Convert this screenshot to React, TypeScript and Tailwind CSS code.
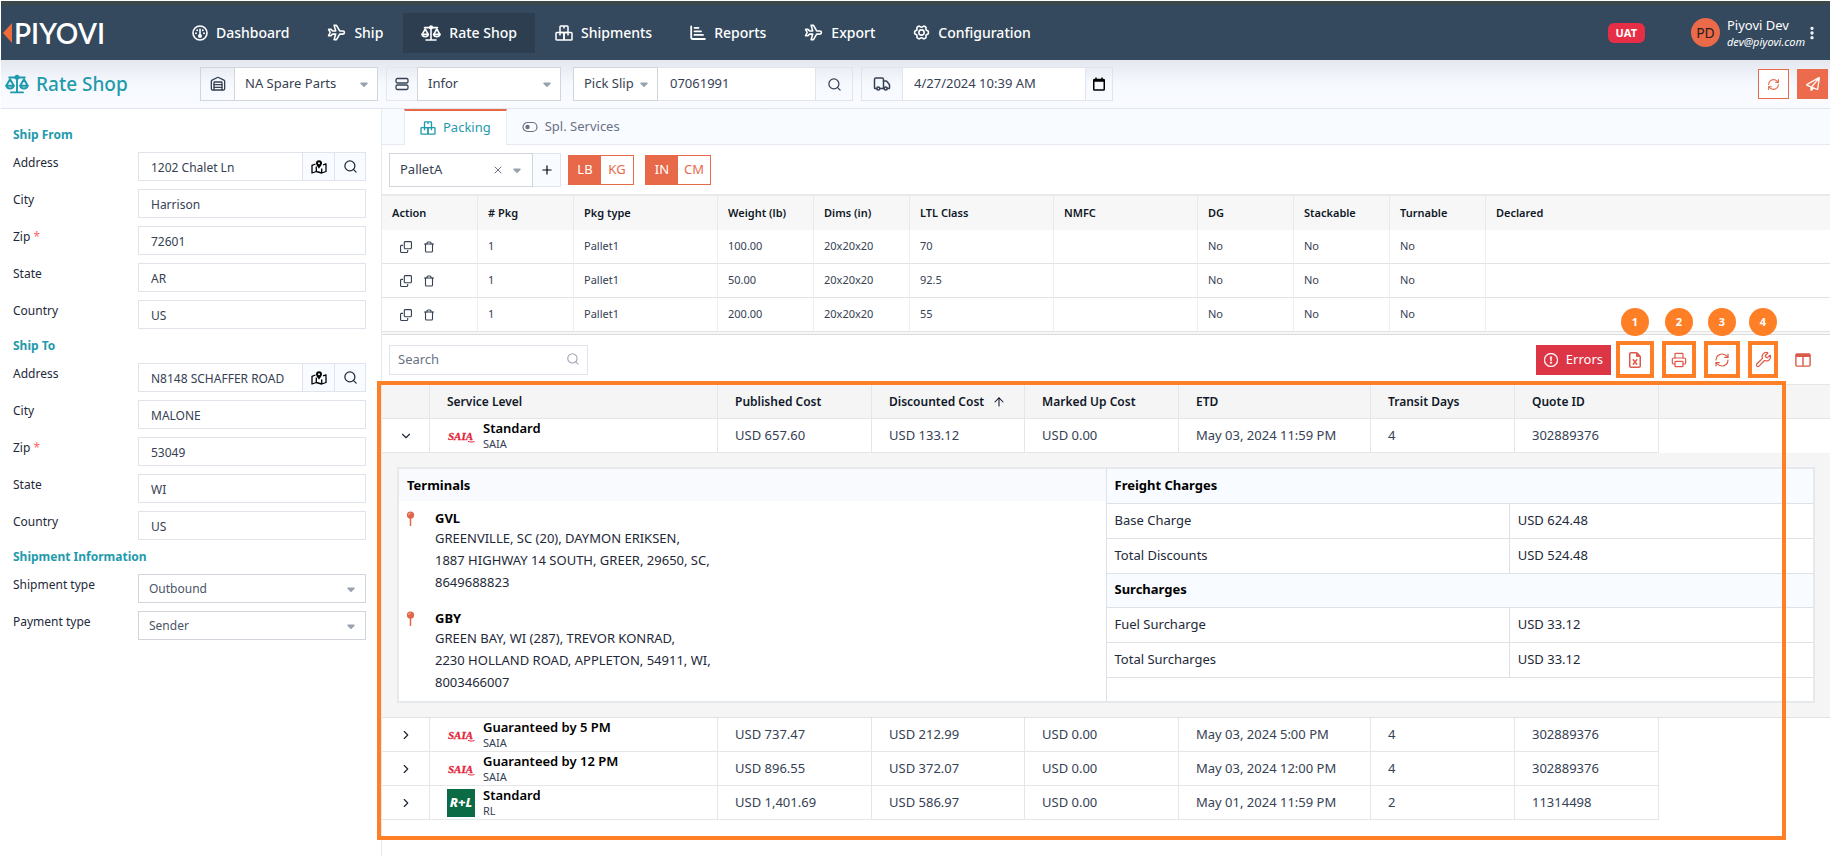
import React, { useState } from 'react';
import { ArrowUp, ChevronDown, ChevronRight, EllipsisVertical, Plus, Printer, RefreshCw, Search, Trash, Truck, Warehouse, Wrench, X } from 'lucide-react';
import { FaCaretDown, FaRegClone, FaRegFileExcel, FaRegPaperPlane } from 'react-icons/fa6';
import { PiGearSixBold } from 'react-icons/pi';
import { TbPlane } from 'react-icons/tb';
import { BsExclamationCircle } from 'react-icons/bs';

type IconProps = { className?: string };

const DashboardIcon = ({ className }: IconProps) => (
    <svg className={className} viewBox="0 0 16 16" fill="none" stroke="currentColor" strokeWidth="1.6" strokeLinecap="round">
        <circle cx="8" cy="8" r="7" />
        <path d="M8 4.2V10" />
        <circle cx="8" cy="11" r="1.2" fill="currentColor" />
        <path d="M4 8.2h.01M12 8.2h.01M5.2 5.2h.01M10.8 5.2h.01" strokeWidth="1.9" />
    </svg>
);

const ScaleIcon = ({ className }: IconProps) => (
    <svg className={className} viewBox="0 0 20 16" fill="none" stroke="currentColor" strokeWidth="1.6" strokeLinecap="round" strokeLinejoin="round">
        <path d="M3.5 2.6h13M10 3.5v11.3M5 15h10" />
        <circle cx="10" cy="2.4" r="1.3" fill="currentColor" />
        <path d="M1.2 9.3 4.2 4l3 5.3M12.8 9.3l3-5.3 3 5.3" />
        <path d="M1 9.4h6.4c-.3 1.5-1.6 2.4-3.2 2.4S1.3 10.9 1 9.4zM12.6 9.4H19c-.3 1.5-1.6 2.4-3.2 2.4s-2.9-.9-3.2-2.4z" />
    </svg>
);

const BoxesIcon = ({ className }: IconProps) => (
    <svg className={className} viewBox="0 0 18 16" fill="none" stroke="currentColor" strokeWidth="1.5" strokeLinejoin="round">
        <rect x="5" y="1" width="8" height="6.5" rx=".8" />
        <rect x="1" y="7.5" width="8" height="7.5" rx=".8" />
        <rect x="9" y="7.5" width="8" height="7.5" rx=".8" />
        <path d="M9 1v2.5M5 7.5v3M13 7.5v3" />
    </svg>
);

const ReportIcon = ({ className }: IconProps) => (
    <svg className={className} viewBox="0 0 16 16" fill="none" stroke="currentColor" strokeWidth="1.8" strokeLinecap="round" strokeLinejoin="round">
        <path d="M1.2 1.5v10.8c0 1 .6 1.7 1.7 1.7h12" />
        <path d="M4.5 2.8h4M4.5 6.3H11M4.5 9.9H13" />
    </svg>
);

const ServerIcon = ({ className }: IconProps) => (
    <svg className={className} viewBox="0 0 14 14" fill="none" stroke="currentColor" strokeWidth="1.3">
        <rect x="1" y="1.5" width="12" height="4.5" rx="1.4" />
        <rect x="1" y="8" width="12" height="4.5" rx="1.4" />
    </svg>
);

const CalendarIcon = ({ className }: IconProps) => (
    <svg className={className} viewBox="0 0 14 14" fill="none" stroke="currentColor" strokeWidth="1.5">
        <rect x="1.75" y="2.5" width="10.5" height="10.5" rx=".8" />
        <path d="M1.5 3.5h11" strokeWidth="2.5" />
        <path d="M4 .5v2.5M10 .5v2.5" />
    </svg>
);

const MapIcon = ({ className }: IconProps) => (
    <svg className={className} viewBox="0 0 16 14" fill="none" stroke="currentColor" strokeWidth="1.3" strokeLinejoin="round">
        <path d="M4.5 4 1 5.3V13l4.3-1.5 5.4 1.5 4.3-1.5V3.8l-3 1" />
        <path d="M5.3 6.5v5M10.7 8.5V13" />
        <path d="M8 .3a3 3 0 0 0-3 3C5 5 8 8.6 8 8.6S11 5 11 3.3a3 3 0 0 0-3-3z" fill="currentColor" stroke="none" />
        <circle cx="8" cy="3.2" r="1" fill="#fff" stroke="none" />
    </svg>
);

const ToggleIcon = ({ className }: IconProps) => (
    <svg className={className} viewBox="0 0 16 12" fill="none" stroke="currentColor" strokeWidth="1.2">
        <rect x="1" y="1.5" width="14" height="9" rx="4.5" />
        <circle cx="5.5" cy="6" r="2.2" fill="currentColor" stroke="none" />
    </svg>
);

const PinIcon = ({ className }: IconProps) => (
    <svg className={className} viewBox="0 0 10 14" fill="none">
        <path d="M5 7v6.5" stroke="#e0674a" strokeWidth="1.4" strokeLinecap="round" />
        <circle cx="5" cy="3.8" r="3.4" fill="#e0674a" />
        <path d="M3.2 3.8A1.8 1.8 0 0 1 5 2" stroke="#f7c4b6" strokeWidth=".8" />
    </svg>
);

const ColumnsIcon = ({ className }: IconProps) => (
    <svg className={className} viewBox="0 0 16 14" fill="none" stroke="currentColor" strokeWidth="1.4">
        <rect x=".9" y=".9" width="14.2" height="12.2" rx="1" />
        <path d="M1 2.5h14" strokeWidth="3" />
        <path d="M8 3v10" />
    </svg>
);

const SaiaLogo = () => (
    <svg className="w-7 h-[18px]" viewBox="0 0 28 18" aria-label="SAIA">
        <text x="1" y="13" fontSize="11" fontWeight="700" fontStyle="italic" fontFamily="Liberation Serif, serif" fill="#e3253a" stroke="#e3253a" strokeWidth=".3">SAIA</text>
        <path d="M21 14.3c2 .9 4 1 6.5.2" fill="none" stroke="#e3253a" />
    </svg>
);

const RlLogo = () => (
    <span className="w-7 h-7 bg-[#0a6b45] text-white text-[13px] font-extrabold italic flex items-center justify-center">R+L</span>
);

const navItems = [
    { label: 'Dashboard', icon: <DashboardIcon className="w-4 h-4" /> },
    { label: 'Ship', icon: <TbPlane className="w-[19px] h-[19px]" /> },
    { label: 'Rate Shop', icon: <ScaleIcon className="w-5 h-4" />, active: true },
    { label: 'Shipments', icon: <BoxesIcon className="w-[18px] h-4" /> },
    { label: 'Reports', icon: <ReportIcon className="w-4 h-4" /> },
    { label: 'Export', icon: <TbPlane className="w-[19px] h-[19px]" /> },
    { label: 'Configuration', icon: <PiGearSixBold className="w-[17px] h-[17px]" /> },
];

const packages = [
    { pkg: 1, type: 'Pallet1', weight: '100.00', dims: '20x20x20', ltl: '70' },
    { pkg: 1, type: 'Pallet1', weight: '50.00', dims: '20x20x20', ltl: '92.5' },
    { pkg: 1, type: 'Pallet1', weight: '200.00', dims: '20x20x20', ltl: '55' },
];

const rates = [
    { service: 'Standard', carrier: 'SAIA', published: 'USD 657.60', discounted: 'USD 133.12', marked: 'USD 0.00', etd: 'May 03, 2024 11:59 PM', days: 4, quote: '302889376' },
    { service: 'Guaranteed by 5 PM', carrier: 'SAIA', published: 'USD 737.47', discounted: 'USD 212.99', marked: 'USD 0.00', etd: 'May 03, 2024 5:00 PM', days: 4, quote: '302889376' },
    { service: 'Guaranteed by 12 PM', carrier: 'SAIA', published: 'USD 896.55', discounted: 'USD 372.07', marked: 'USD 0.00', etd: 'May 03, 2024 12:00 PM', days: 4, quote: '302889376' },
    { service: 'Standard', carrier: 'RL', published: 'USD 1,401.69', discounted: 'USD 586.97', marked: 'USD 0.00', etd: 'May 01, 2024 11:59 PM', days: 2, quote: '11314498' },
];

const terminals = [
    { code: 'GVL', lines: ['GREENVILLE, SC (20), DAYMON ERIKSEN,', '1887 HIGHWAY 14 SOUTH, GREER, 29650, SC,', '8649688823'] },
    { code: 'GBY', lines: ['GREEN BAY, WI (287), TREVOR KONRAD,', '2230 HOLLAND ROAD, APPLETON, 54911, WI,', '8003466007'] },
];

const charges = [
    { title: 'Freight Charges', rows: [['Base Charge', 'USD 624.48'], ['Total Discounts', 'USD 524.48']] },
    { title: 'Surcharges', rows: [['Fuel Surcharge', 'USD 33.12'], ['Total Surcharges', 'USD 33.12']] },
];

const tools = [
    { label: 'Export to Excel', width: 'w-[38px]', icon: <FaRegFileExcel className="w-4 h-4" /> },
    { label: 'Print', width: 'w-[34px]', icon: <Printer className="w-4 h-4" strokeWidth={1.8} /> },
    { label: 'Refresh rates', width: 'w-9', icon: <RefreshCw className="w-4 h-4" strokeWidth={1.8} /> },
    { label: 'Settings', width: 'w-[30px]', icon: <Wrench className="w-[17px] h-[17px]" strokeWidth={1.8} /> },
];

const Header = () => (
    <header className="flex items-center h-[59px] bg-[#34495e] border-t-4 border-[#3d484b] text-white">
        <a href="#" className="flex items-center w-[173px] pl-[2px] gap-[2px]">
            <svg className="w-[9px] h-5" viewBox="0 0 9 20"><path d="M9 0v20L0 10z" fill="#ee6b3c" /></svg>
            <span className="font-[Lato] text-[28px] leading-7 font-semibold">PIYOVI</span>
        </a>
        <nav className="flex gap-[2px]">
            {navItems.map(item => (
                <a key={item.label} href="#" className={`flex items-center gap-2 h-10 px-[18px] text-sm font-medium ${item.active ? 'bg-[#2c3e50]' : ''}`}>
                    {item.icon}
                    <span>{item.label}</span>
                </a>
            ))}
        </nav>
        <span className="ml-auto mr-[46px] h-5 px-2 rounded-md bg-[#e62e46] text-[11px] leading-5 font-bold">UAT</span>
        <span className="w-[29px] h-[29px] rounded-full bg-[#ea6a4a] text-[#2b1a17] text-sm flex items-center justify-center">PD</span>
        <div className="ml-[7px] w-[75px] whitespace-nowrap">
            <div className="text-[13px] leading-[17px]">Piyovi Dev</div>
            <div className="text-[11px] leading-[15px] italic">dev@piyovi.com</div>
        </div>
        <button aria-label="User menu" className="ml-[2px] mr-[10px]"><EllipsisVertical className="w-4 h-4" strokeWidth={3} /></button>
    </header>
);

interface TopSelectProps {
    label: string;
    value: string;
    width: string;
}

const TopSelect: React.FC<TopSelectProps> = ({ label, value, width }) => (
    <div className={`relative h-full ${width}`}>
        <select aria-label={label} className="w-full h-full pl-[10px] pr-5 border border-gray-300 bg-white appearance-none outline-none">
            <option>{value}</option>
        </select>
        <FaCaretDown className="absolute right-2 top-1/2 -translate-y-1/2 w-3 h-3 text-gray-400 pointer-events-none" />
    </div>
);

const TopBar = () => (
    <div className="flex items-center h-[49px] pr-[2px] bg-linear-to-b from-[#e4e7ee] via-[#f6f9fe] via-50% to-[#f9fbff] border-b border-[#dfe6ef] text-[13px] text-gray-700">
        <h1 className="flex items-center gap-[7px] w-[199px] pl-1 text-[19px] font-medium text-[#1f9aad]">
            <ScaleIcon className="w-6 h-5" />
            Rate Shop
        </h1>
        <div className="flex h-[34px]">
            <span className="w-[34px] border border-r-0 border-gray-300 flex items-center justify-center"><Warehouse className="w-[18px] h-4" strokeWidth={2} /></span>
            <TopSelect label="Warehouse" value="NA Spare Parts" width="w-36" />
        </div>
        <div className="flex h-[34px] ml-2">
            <span className="w-[31px] border border-r-0 border-gray-200 flex items-center justify-center"><ServerIcon className="w-[14px] h-[14px]" /></span>
            <TopSelect label="ERP" value="Infor" width="w-36" />
        </div>
        <div className="flex h-[34px] ml-3">
            <TopSelect label="Search by" value="Pick Slip" width="w-[85px]" />
            <input aria-label="Pick slip number" defaultValue="07061991" className="w-[157px] px-3 border-y border-[#dfe4ee] bg-white outline-none" />
            <button aria-label="Find" className="w-[38px] border border-[#dfe4ee] flex items-center justify-center"><Search className="w-[15px] h-[15px]" strokeWidth={2} /></button>
        </div>
        <div className="flex h-[34px] ml-2">
            <span className="w-[42px] border border-[#dfe4ee] flex items-center justify-center"><Truck className="w-[18px] h-[18px]" strokeWidth={2} /></span>
            <input aria-label="Ship date" defaultValue="4/27/2024 10:39 AM" className="w-[182px] px-[11px] border-y border-[#dfe4ee] bg-white outline-none" />
            <button aria-label="Pick a date" className="w-7 border border-[#dfe4ee] flex items-center justify-center text-black"><CalendarIcon className="w-[14px] h-[14px]" /></button>
        </div>
        <button aria-label="Reload" className="ml-auto w-[31px] h-[30px] border border-[#e8694a] bg-white text-[#e8694a] flex items-center justify-center"><RefreshCw className="w-[13px] h-[13px]" /></button>
        <button aria-label="Get rates" className="ml-2 w-[31px] h-[30px] bg-[#ec6b4d] text-white flex items-center justify-center"><FaRegPaperPlane className="w-[14px] h-[14px]" /></button>
    </div>
);

const AddressForm = ({ title, prefix, values }: { title: string; prefix: string; values: string[] }) => (
    <>
        <h2 className="h-[18px] leading-[18px] font-bold text-[#1f9aad]">{title}</h2>
        {['Address', 'City', 'Zip', 'State', 'Country'].map((field, i) => (
            <div key={field} className="flex h-[29px]">
                <label htmlFor={`${prefix}-${field}`} className="w-[125px] leading-[22px]">
                    {field}{field === 'Zip' && <span className="text-red-400"> *</span>}
                </label>
                <input id={`${prefix}-${field}`} defaultValue={values[i]} className="flex-1 min-w-0 px-3 pt-[2px] border border-[#dfe4ea] text-gray-700 outline-none" />
                {field === 'Address' && (
                    <>
                        <button aria-label={`${title} map`} className="w-8 border-y border-r border-[#dfe4ee] bg-[#f8fbff] text-black flex items-center justify-center"><MapIcon className="w-4 h-[14px]" /></button>
                        <button aria-label={`${title} lookup`} className="w-[31px] border-y border-r border-[#dfe4ee] bg-[#f8fbff] flex items-center justify-center"><Search className="w-[15px] h-[15px]" strokeWidth={2} /></button>
                    </>
                )}
            </div>
        ))}
    </>
);

const Sidebar = () => (
    <aside className="w-[380px] shrink-0 pt-[17px] pl-3 pr-[15px] flex flex-col gap-2 text-xs text-gray-800">
        <AddressForm title="Ship From" prefix="from" values={['1202 Chalet Ln', 'Harrison', '72601', 'AR', 'US']} />
        <AddressForm title="Ship To" prefix="to" values={['N8148 SCHAFFER ROAD', 'MALONE', '53049', 'WI', 'US']} />
        <h2 className="h-[18px] leading-[18px] font-bold text-[#1f9aad]">Shipment Information</h2>
        {[['Shipment type', 'Outbound'], ['Payment type', 'Sender']].map(([label, value]) => (
            <div key={label} className="flex h-[29px]">
                <label htmlFor={label} className="w-[125px] leading-[22px]">{label}</label>
                <div className="relative flex-1">
                    <select id={label} className="w-full h-full pl-[10px] border border-gray-300 bg-white text-gray-600 appearance-none outline-none">
                        <option>{value}</option>
                    </select>
                    <FaCaretDown className="absolute right-[9px] top-1/2 -translate-y-1/2 w-3 h-3 text-gray-400 pointer-events-none" />
                </div>
            </div>
        ))}
    </aside>
);

const UnitToggle = ({ options }: { options: string[] }) => {
    const [selected, setSelected] = useState(options[0]);
    return (
        <div className="flex h-[30px] border border-[#e8694a] text-[13px]">
            {options.map(o => (
                <button key={o} onClick={() => setSelected(o)} className={`w-8 ${selected === o ? 'bg-[#e8694a] text-white' : 'bg-white text-[#e8694a]'}`}>{o}</button>
            ))}
        </div>
    );
};

const packageColumns = [
    ['Action', 'w-24'], ['# Pkg', 'w-24'], ['Pkg type', 'w-36'], ['Weight (lb)', 'w-24'], ['Dims (in)', 'w-24'], ['LTL Class', 'w-36'],
    ['NMFC', 'w-36'], ['DG', 'w-24'], ['Stackable', 'w-24'], ['Turnable', 'w-24'], ['Declared', ''],
];

const PackageTable = () => (
    <table className="w-full table-fixed border-separate border-spacing-0 text-[11px] text-gray-700">
        <thead>
            <tr className="h-9 bg-[#f7f7f7] text-left text-gray-900">
                {packageColumns.map(([name, width]) => (
                    <th key={name} className={`${width} px-[10px] font-semibold border-t-2 border-r border-[#e9e9e9] last:border-r-0`}>{name}</th>
                ))}
            </tr>
        </thead>
        <tbody>
            {packages.map((p, i) => (
                <tr key={i} className="h-[34px] *:px-[10px] *:border-b *:border-r *:border-r-[#efefef] *:border-b-[#e2e2e2] *:last:border-r-0">
                    <td>
                        <div className="flex gap-[11px] pl-2 text-gray-700">
                            <button aria-label="Duplicate package"><FaRegClone className="w-3 h-3" /></button>
                            <button aria-label="Delete package"><Trash className="w-3 h-3" strokeWidth={2.2} /></button>
                        </div>
                    </td>
                    <td>{p.pkg}</td>
                    <td>{p.type}</td>
                    <td>{p.weight}</td>
                    <td>{p.dims}</td>
                    <td>{p.ltl}</td>
                    <td></td>
                    <td>No</td>
                    <td>No</td>
                    <td>No</td>
                    <td></td>
                </tr>
            ))}
        </tbody>
    </table>
);

const RateDetail = () => (
    <div className="flex my-[14px] mx-[15px] border-2 border-[#e6e9ec] bg-white text-gray-800">
        <div className="flex-1">
            <h3 className="h-8 px-2 leading-8 font-bold text-black bg-[#f8fafe]">Terminals</h3>
            {terminals.map(t => (
                <div key={t.code} className="flex py-2 pl-[6px] gap-[19px]">
                    <PinIcon className="w-[11px] h-[15px] mt-[2px]" />
                    <div className="leading-[22px]">
                        <div className="font-bold text-black leading-[18px]">{t.code}</div>
                        {t.lines.map(line => <div key={line}>{line}</div>)}
                    </div>
                </div>
            ))}
        </div>
        <div className="flex-1 border-l border-[#dee2e6]">
            <table className="w-full table-fixed border-collapse">
                <colgroup>
                    <col className="w-[57%]" />
                    <col />
                </colgroup>
                <tbody>
                    {charges.map(group => (
                        <React.Fragment key={group.title}>
                            <tr className="h-[34px] bg-[#f8fbff] border-b border-[#dee2e6]">
                                <th colSpan={2} className="px-2 text-left font-bold text-black">{group.title}</th>
                            </tr>
                            {group.rows.map(([name, amount]) => (
                                <tr key={name} className="h-[35px] border-b border-[#dee2e6]">
                                    <td className="px-2 border-r border-[#dee2e6]">{name}</td>
                                    <td className="px-2">{amount}</td>
                                </tr>
                            ))}
                        </React.Fragment>
                    ))}
                </tbody>
            </table>
        </div>
    </div>
);

const rateColumns = [
    ['Service Level', 'w-72'], ['Published Cost', 'w-[154px]'], ['Discounted Cost', 'w-[153px]'], ['Marked Up Cost', 'w-[154px]'],
    ['ETD', 'w-48'], ['Transit Days', 'w-36'], ['Quote ID', 'w-36'],
];

const RateTable = () => {
    const [open, setOpen] = useState(0);
    return (
        <table className="w-full table-fixed border-separate border-spacing-0 text-[13px] text-gray-700">
            <thead>
                <tr className="h-[35px] bg-[#f5f5f6] text-left text-gray-900 *:border-y *:border-r *:border-[#e6e6e6] *:last:border-r-0">
                    <th className="w-12"></th>
                    {rateColumns.map(([name, width]) => (
                        <th key={name} className={`${width} px-[17px] text-xs font-semibold`}>
                            <span className="flex items-center gap-2">{name}{name === 'Discounted Cost' && <ArrowUp className="w-[14px] h-[14px]" strokeWidth={1.8} />}</span>
                        </th>
                    ))}
                    <th></th>
                </tr>
            </thead>
            <tbody>
                {rates.map((r, i) => (
                    <React.Fragment key={i}>
                        <tr className="h-[34px] *:px-[17px] *:border-b *:border-r *:border-[#e6e6e6] *:last:border-0">
                            <td>
                                <button aria-label={`Details of ${r.service}`} onClick={() => setOpen(open === i ? -1 : i)} className="flex text-gray-800">
                                    {open === i ? <ChevronDown className="w-[14px] h-[14px]" /> : <ChevronRight className="w-[14px] h-[14px]" />}
                                </button>
                            </td>
                            <td>
                                <div className="flex items-center gap-2">
                                    {r.carrier === 'SAIA' ? <SaiaLogo /> : <RlLogo />}
                                    <div>
                                        <div className="text-[13px] leading-4 font-semibold text-black">{r.service}</div>
                                        <div className="text-[11px] leading-4">{r.carrier}</div>
                                    </div>
                                </div>
                            </td>
                            <td>{r.published}</td>
                            <td>{r.discounted}</td>
                            <td>{r.marked}</td>
                            <td>{r.etd}</td>
                            <td>{r.days}</td>
                            <td>{r.quote}</td>
                            <td></td>
                        </tr>
                        {open === i && (
                            <tr>
                                <td colSpan={9} className="p-0 bg-[#f5f5f5] border-b border-[#e2e2e2]"><RateDetail /></td>
                            </tr>
                        )}
                    </React.Fragment>
                ))}
            </tbody>
        </table>
    );
};

const App: React.FC = () => (
    <div className="min-h-screen flex flex-col pt-px pl-px pr-[2px] bg-white font-['Noto_Sans',sans-serif]">
        <Header />
        <TopBar />
        <div className="flex flex-1">
            <Sidebar />
            <main className="flex-1 min-w-0 border-l border-[#e6ebf2]">
                <div className="flex h-9 pl-[22px] bg-[#f8fbff] border-b border-[#e6ebf2] text-[13px]">
                    <button className="flex items-center gap-[7px] h-9 px-[15px] bg-white border-t-2 border-t-[#e8694a] border-x border-x-[#e6ebf2] text-[#1f9aad]">
                        <BoxesIcon className="w-4 h-[14px]" />Packing
                    </button>
                    <button className="flex items-center gap-[7px] px-[15px] text-gray-500">
                        <ToggleIcon className="w-4 h-3" />Spl. Services
                    </button>
                </div>
                <div className="flex items-center h-[49px] pl-[7px]">
                    <div className="relative flex h-[34px] text-[13px]">
                        <select aria-label="Pallet" className="w-36 pl-[10px] border border-gray-300 bg-white text-gray-700 appearance-none outline-none">
                            <option>PalletA</option>
                        </select>
                        <X className="absolute left-[103px] top-[11px] w-3 h-3 text-gray-500 pointer-events-none" />
                        <FaCaretDown className="absolute left-[122px] top-[11px] w-3 h-3 text-gray-400 pointer-events-none" />
                        <button aria-label="Add pallet" className="w-7 border-y border-r border-[#dfe4ee] bg-[#f8fbff] flex items-center justify-center text-black"><Plus className="w-[14px] h-[14px]" /></button>
                    </div>
                    <div className="flex gap-[11px] ml-[7px]">
                        <UnitToggle options={['LB', 'KG']} />
                        <UnitToggle options={['IN', 'CM']} />
                    </div>
                </div>
                <PackageTable />
                <div className="h-[3px] bg-[#f7f7f7] border-b border-[#dcdcdc]" />
                <div className="flex items-center h-[49px] pl-[7px] pr-[10px] gap-2">
                    <label className="relative flex h-[30px] w-[199px]">
                        <input type="search" aria-label="Search" placeholder="Search" className="w-full pl-2 pr-7 border border-[#dfe4ea] text-[13px] placeholder:text-gray-500 outline-none" />
                        <Search className="absolute right-2 top-[7px] w-[14px] h-[14px] text-gray-400" strokeWidth={1.8} />
                    </label>
                    <button className="ml-auto -mr-[3px] flex items-center gap-2 h-[30px] px-2 bg-[#dc3545] text-white text-[13px]">
                        <BsExclamationCircle className="w-[14px] h-[14px]" strokeWidth={0.5} />Errors
                    </button>
                    {tools.map((tool, i) => (
                        <div key={tool.label} className="relative">
                            <button aria-label={tool.label} className={`${tool.width} h-[37px] border-4 border-[#ff7f27] text-[#dd5a48] flex items-center justify-center`}>{tool.icon}</button>
                            <span className="absolute -top-[33px] left-1/2 -translate-x-1/2 w-7 h-7 rounded-full bg-[#ff7f27] text-white text-[11px] leading-7 font-bold text-center">{i + 1}</span>
                        </div>
                    ))}
                    <button aria-label="Columns" className="w-[34px] h-[30px] text-[#dd5a48] flex items-center justify-center"><ColumnsIcon className="w-4 h-[14px]" /></button>
                </div>
                <div className="relative pb-5">
                    <RateTable />
                    <div className="absolute -left-[5px] right-11 -top-[3px] bottom-0 border-4 border-[#ff7f27] pointer-events-none" />
                </div>
            </main>
        </div>
    </div>
);

export default App;
